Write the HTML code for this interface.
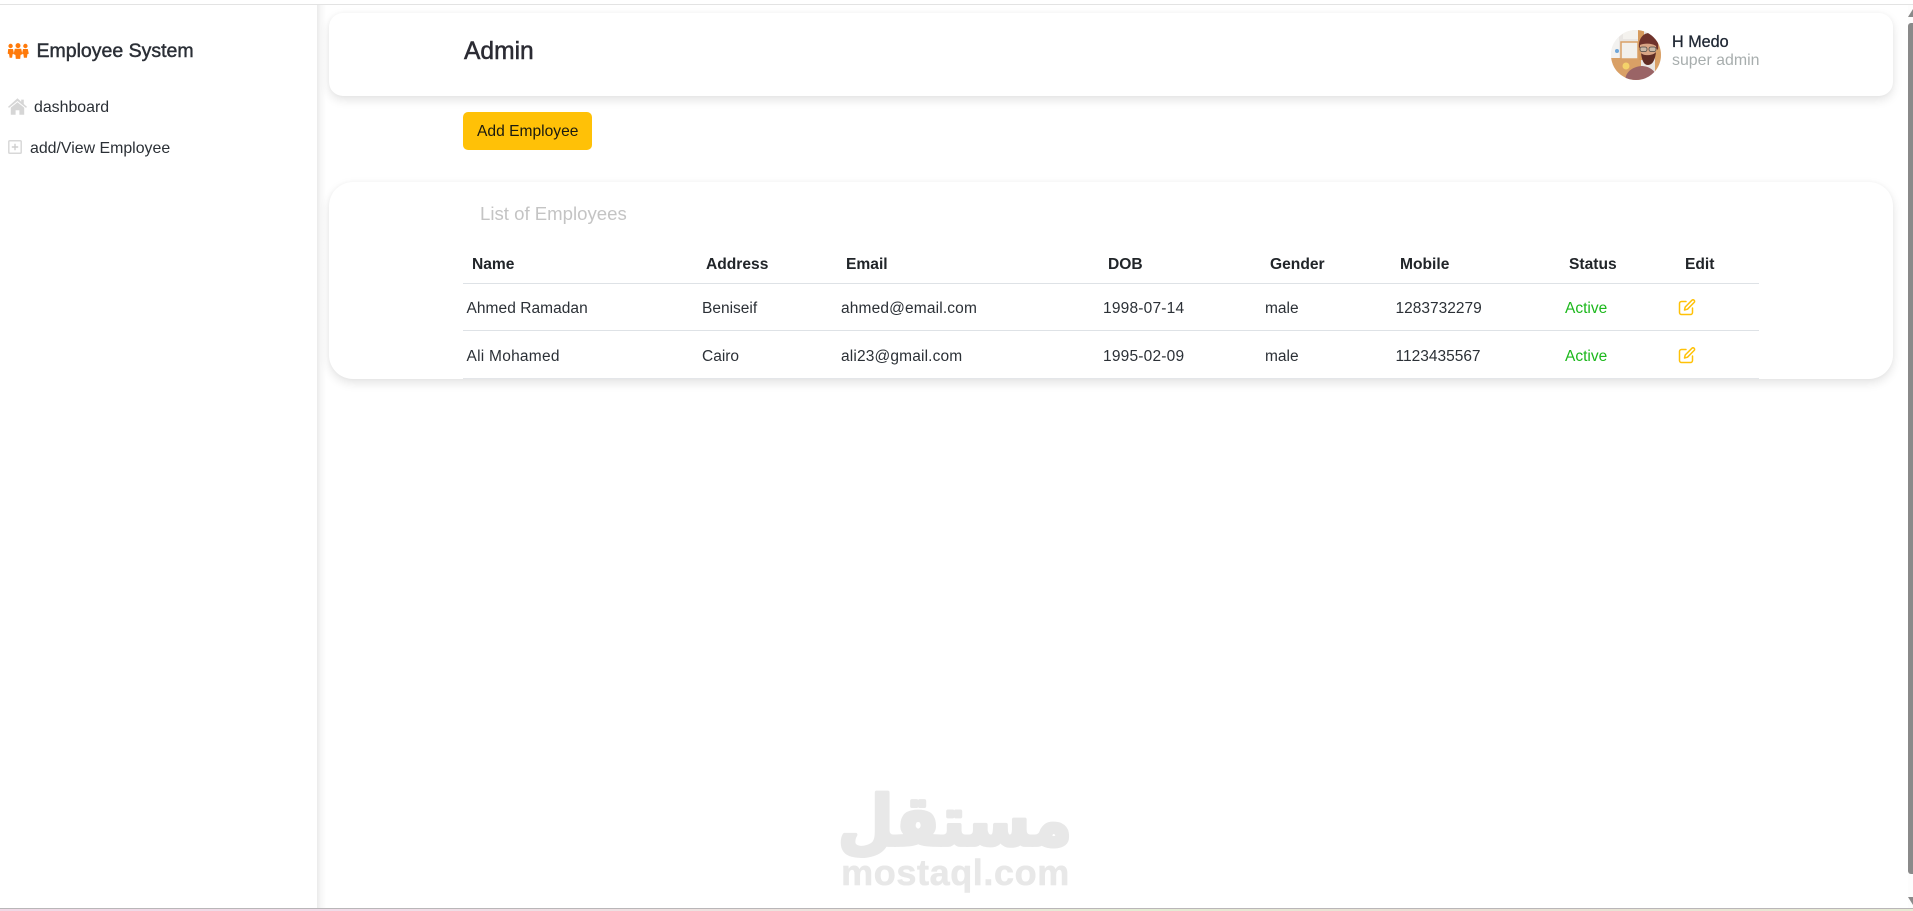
<!DOCTYPE html>
<html lang="en">
<head>
<meta charset="utf-8">
<title>Employee System</title>
<style>
html,body{margin:0;padding:0;width:1913px;height:911px;overflow:hidden;background:#fff;font-family:"Liberation Sans","Noto Sans CJK SC",sans-serif;color:#2b3036}
.a{position:absolute}
.t{position:absolute;white-space:nowrap;line-height:20px;font-size:15.5px}
.h{font-weight:700;font-size:15.6px;color:#212529}
.n{letter-spacing:.2px}
.g{color:#1cb81c}
.l{position:absolute;left:463px;width:1296px;height:1px;background:#dee2e6}
.card{position:absolute;left:329px;width:1564px;background:#fff;box-shadow:0 4px 10px rgba(0,0,0,.11),0 0 4px rgba(0,0,0,.03)}
</style>
</head>
<body>
<div class="a" style="left:0;top:4px;width:1913px;height:1px;background:#e3e3e3"></div>

<!-- sidebar -->
<div class="a" style="left:317px;top:5px;width:9px;height:903px;background:linear-gradient(90deg,#eaeaea,#f6f6f6 40%,#fff)"></div>

<svg class="a" style="left:7px;top:43px" width="22" height="16" viewBox="0 0 22 16" fill="#ff7a0a">
<circle cx="3.6" cy="3" r="2.2"/><circle cx="18.4" cy="3" r="2.2"/><circle cx="11" cy="2.6" r="2.5"/>
<path d="M1.2 6h4.8l1 4.6-1.4.6-.5 3.6H2.6l-.5-3.6L.7 10.6z"/>
<path d="M16 6h4.8l1 4.6-1.4.6-.5 3.6h-3l-.5-3.6-1.4-.6z"/>
<path d="M7.8 5.8h6.4l1.2 5.4-1.8.7-.4 4h-4.4l-.4-4-1.8-.7z"/>
</svg>
<div class="t" style="left:36.5px;top:41px;font-size:19.5px;color:#2b2f36;-webkit-text-stroke:.45px #2b2f36">Employee System</div>

<svg class="a" style="left:8px;top:98px" width="19" height="17" viewBox="0 0 19 17" fill="#d6d6d6">
<path d="M9.5 .3L0 8.9l1 1L9.5 3l8.5 6.9 1-1-3.2-2.9V1.6h-2.6v2.2z"/>
<path d="M2.8 9.6L9.5 4.2l6.7 5.4v7.2h-4.8v-4.6H7.6v4.6H2.8z"/>
</svg>
<div class="t" style="left:34px;top:98px;font-size:15.9px">dashboard</div>

<svg class="a" style="left:8px;top:140px" width="14" height="14" viewBox="0 0 14 14" fill="none" stroke="#d8d8d8">
<rect x="0.8" y="0.8" width="12.4" height="12.4" rx="1" stroke-width="1.5"/>
<path d="M7 3.8v6.4M3.8 7h6.4" stroke-width="1.4" stroke="#cfcfcf"/>
</svg>
<div class="t" style="left:30px;top:139px;font-size:15.9px">add/View Employee</div>

<!-- header card -->
<div class="card" style="top:13px;height:83px;border-radius:14px"></div>
<div class="t" style="left:464px;top:42px;font-size:24.6px;color:#2b2b33;-webkit-text-stroke:.5px #2b2b33">Admin</div>

<svg class="a" style="left:1611px;top:30px" width="50" height="50" viewBox="0 0 50 50">
<defs><clipPath id="c"><circle cx="25" cy="25" r="25"/></clipPath></defs>
<g clip-path="url(#c)">
<rect width="50" height="50" fill="#e9e6e3"/>
<rect x="0" y="28" width="30" height="22" fill="#d9a066"/>
<rect x="27" y="0" width="6" height="30" fill="#d69a5c"/>
<rect x="10" y="12" width="17" height="17" fill="#f2f0ec" stroke="#d9a066" stroke-width="1.5"/>
<rect x="0" y="4" width="8" height="24" fill="#f3f2f0"/>
<rect x="12" y="0" width="15" height="9" fill="#f4f2ee"/>
<circle cx="6" cy="21" r="2" fill="#6fa6d8"/>
<circle cx="15" cy="36" r="3.5" fill="#f4d26a"/>
<rect x="44" y="8" width="6" height="35" fill="#d9a066"/>
<path d="M14 50C15 41 22 37 30 36 39 36 45 41 47 50z" fill="#9a6466"/>
<path d="M28 18C27 8 33 3 38 3 46 4 48 11 47 20L44 17 31 16z" fill="#6f332c"/>
<path d="M29 15C33 13 41 13 45 16 46 24 43 33 37 34 32 33 29 25 29 15z" fill="#d8a585"/>
<path d="M30 23C32 26 42 26 45 22 44 31 41 35 37 35 33 35 31 31 30 23z" fill="#5f2c24"/>
<rect x="29" y="17" width="7" height="4.5" rx="2" fill="#c9b9a8" stroke="#4f4a46" stroke-width=".8"/>
<rect x="38" y="17" width="7" height="4.5" rx="2" fill="#c9b9a8" stroke="#4f4a46" stroke-width=".8"/>
</g>
</svg>
<div class="t" style="left:1672px;top:32px;font-size:16.2px;color:#1f2733;-webkit-text-stroke:.3px #1f2733">H Medo</div>
<div class="t" style="left:1672px;top:51px;font-size:15.9px;color:#a8aeae">super admin</div>

<!-- button -->
<div class="a" style="left:463px;top:112px;width:129px;height:38px;background:#ffc107;border-radius:5px"></div>
<div class="t" style="left:477px;top:122px;font-size:15.6px;color:#1a1a10">Add Employee</div>

<!-- table card -->
<div class="card" style="top:182px;height:197px;border-radius:24px"></div>
<div class="t" style="left:480px;top:204px;font-size:18.6px;color:#c4c4c4">List of Employees</div>

<div class="t h" style="left:472px;top:255px">Name</div>
<div class="t h" style="left:706px;top:255px">Address</div>
<div class="t h" style="left:846px;top:255px">Email</div>
<div class="t h" style="left:1108px;top:255px">DOB</div>
<div class="t h" style="left:1270px;top:255px">Gender</div>
<div class="t h" style="left:1400px;top:255px">Mobile</div>
<div class="t h" style="left:1569px;top:255px">Status</div>
<div class="t h" style="left:1685px;top:255px">Edit</div>

<div class="l" style="top:283px"></div>
<div class="t" style="left:466.5px;top:299px;letter-spacing:.05px">Ahmed Ramadan</div>
<div class="t" style="left:702px;top:299px">Beniseif</div>
<div class="t" style="left:841px;top:299px;letter-spacing:.15px">ahmed@email.com</div>
<div class="t n" style="left:1103px;top:299px">1998-07-14</div>
<div class="t" style="left:1265px;top:299px">male</div>
<div class="t" style="left:1395.5px;top:299px">1283732279</div>
<div class="t g" style="left:1565px;top:299px">Active</div>
<svg class="a" style="left:1678px;top:298px" width="18" height="18" viewBox="0 0 18 18" fill="none" stroke="#ffc107" stroke-width="1.5" stroke-linejoin="round" stroke-linecap="round">
<path d="M8 3.5H3.5A2 2 0 0 0 1.5 5.5v9a2 2 0 0 0 2 2h9a2 2 0 0 0 2-2V10"/>
<path d="M6.5 12l.7-3L14 2.2a1.4 1.4 0 0 1 2 0l.2.2a1.4 1.4 0 0 1 0 2L9.5 11.2z"/>
</svg>

<div class="l" style="top:330px"></div>
<div class="t" style="left:466.5px;top:347px;letter-spacing:.25px">Ali Mohamed</div>
<div class="t" style="left:702px;top:347px">Cairo</div>
<div class="t" style="left:841px;top:347px;letter-spacing:.15px">ali23@gmail.com</div>
<div class="t n" style="left:1103px;top:347px">1995-02-09</div>
<div class="t" style="left:1265px;top:347px">male</div>
<div class="t" style="left:1395.5px;top:347px">1123435567</div>
<div class="t g" style="left:1565px;top:347px">Active</div>
<svg class="a" style="left:1678px;top:346px" width="18" height="18" viewBox="0 0 18 18" fill="none" stroke="#ffc107" stroke-width="1.5" stroke-linejoin="round" stroke-linecap="round">
<path d="M8 3.5H3.5A2 2 0 0 0 1.5 5.5v9a2 2 0 0 0 2 2h9a2 2 0 0 0 2-2V10"/>
<path d="M6.5 12l.7-3L14 2.2a1.4 1.4 0 0 1 2 0l.2.2a1.4 1.4 0 0 1 0 2L9.5 11.2z"/>
</svg>
<div class="l" style="top:378px;background:#e4e6e9"></div>

<!-- watermark -->
<svg class="a" style="left:830px;top:775px" width="250" height="125" viewBox="0 0 250 125">
<text transform="translate(125 70) scale(1 1.08)" text-anchor="middle" font-family="'DejaVu Sans',sans-serif" font-weight="700" font-size="64" fill="#e8e8e8" stroke="#e8e8e8" stroke-width="3.5" stroke-linejoin="round" direction="rtl">مستقل</text>
<text x="125.5" y="110" text-anchor="middle" font-family="'Liberation Sans',sans-serif" font-weight="700" font-size="36" fill="#e8e8e8" stroke="#e8e8e8" stroke-width=".6" stroke-linejoin="round" letter-spacing=".6">mostaql.com</text>
</svg>

<!-- scrollbar -->
<div class="a" style="left:1908px;top:5px;width:5px;height:903px;background:#fdfdfd"></div>
<div class="a" style="left:1908px;top:23px;width:5px;height:851px;background:#8a8a8a;border-radius:3px 0 0 3px"></div>
<svg class="a" style="left:1908px;top:9px" width="5" height="8"><path d="M5 0V8H0z" fill="#8a8a8a"/></svg>
<svg class="a" style="left:1908px;top:897px" width="5" height="8"><path d="M0 0H5V8z" fill="#8a8a8a"/></svg>

<!-- bottom strip -->
<div class="a" style="left:0;top:908px;width:1913px;height:1px;background:#b9b6b8"></div>
<div class="a" style="left:0;top:909px;width:1913px;height:2px;background:linear-gradient(90deg,#f0d9e6 0,#f0dde8 20%,#ece4dc 45%,#e4ecd4 60%,#eadfd6 75%,#e6ead4 100%)"></div>
</body>
</html>
